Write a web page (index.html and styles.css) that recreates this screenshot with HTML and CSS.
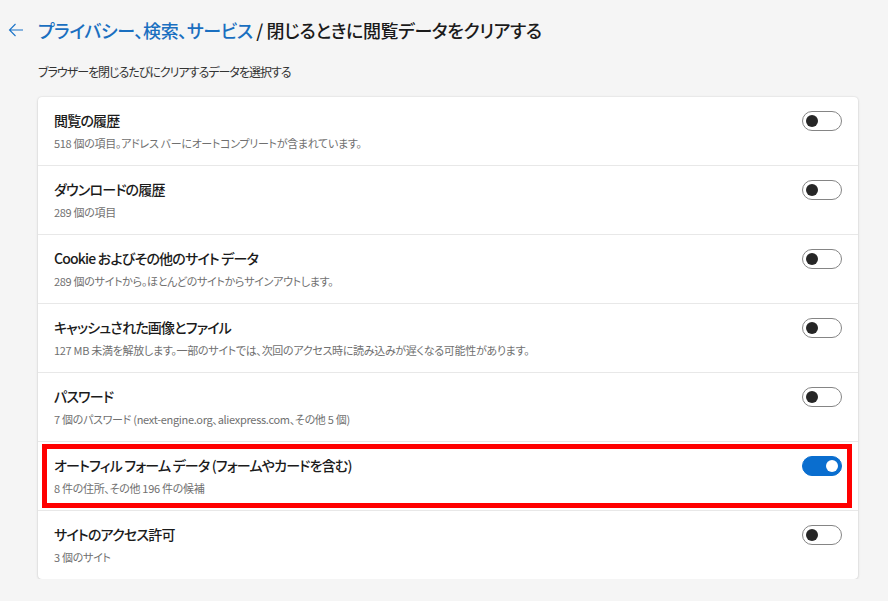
FILE: index.html
```html
<!DOCTYPE html>
<html lang="ja">
<head>
<meta charset="utf-8">
<link rel="stylesheet" href="styles.css">
</head>
<body>
<div class="page">
  <header class="head">
    <svg class="back" width="16" height="16" viewBox="0 0 16 16"><path d="M15 8H1.5M7.5 2L1.5 8l6 6" fill="none" stroke="#1a73c8" stroke-width="1.1"/></svg>
    <h1 class="title"><span class="crumb">プライバシー、検索、サービス</span> / 閉じるときに閲覧データをクリアする</h1>
  </header>
  <p class="lead">ブラウザーを閉じるたびにクリアするデータを選択する</p>
  <div class="card">
    <div class="row">
      <div class="text"><div class="name">閲覧の履歴</div><div class="desc">518 個の項目。アドレス バーにオートコンプリートが含まれています。</div></div>
      <span class="toggle"></span>
    </div>
    <div class="row">
      <div class="text"><div class="name">ダウンロードの履歴</div><div class="desc">289 個の項目</div></div>
      <span class="toggle"></span>
    </div>
    <div class="row">
      <div class="text"><div class="name">Cookie およびその他のサイト データ</div><div class="desc">289 個のサイトから。ほとんどのサイトからサインアウトします。</div></div>
      <span class="toggle"></span>
    </div>
    <div class="row">
      <div class="text"><div class="name">キャッシュされた画像とファイル</div><div class="desc">127 MB 未満を解放します。一部のサイトでは、次回のアクセス時に読み込みが遅くなる可能性があります。</div></div>
      <span class="toggle"></span>
    </div>
    <div class="row">
      <div class="text"><div class="name">パスワード</div><div class="desc">7 個のパスワード (next-engine.org、aliexpress.com、その他 5 個)</div></div>
      <span class="toggle"></span>
    </div>
    <div class="row">
      <div class="text"><div class="name">オートフィル フォーム データ (フォームやカードを含む)</div><div class="desc">8 件の住所、その他 196 件の候補</div></div>
      <span class="toggle on"></span>
      <div class="highlight"></div>
    </div>
    <div class="row">
      <div class="text"><div class="name">サイトのアクセス許可</div><div class="desc">3 個のサイト</div></div>
      <span class="toggle"></span>
    </div>
  </div>
</div>
</body>
</html>
```
FILE: styles.css
```css
* { box-sizing: border-box; }
html, body { margin: 0; padding: 0; }
body {
  background: #f5f5f5;
  font-family: "Noto Sans CJK JP", "Noto Sans", sans-serif;
  font-feature-settings: "palt";
  color: #1b1b1b;
}
.page { padding: 0 30px 0 38px; width: 888px; }
.head {
  display: flex;
  align-items: center;
  height: 24px;
  margin-top: 18px;
  margin-left: -30px;
}
.back { margin-right: 14px; flex: none; }
.title {
  margin: 0;
  font-size: 18px;
  font-weight: 500;
  line-height: 24px;
  letter-spacing: -0.4px;
  white-space: nowrap;
  color: #1b1b1b;
}
.crumb { color: #1a6fc0; }
.lead {
  margin: 20px 0 0;
  font-size: 12px;
  line-height: 20px;
  letter-spacing: -1px;
  color: #333;
}
.card {
  margin-top: 15px;
  width: 820px;
  background: #fff;
  border-radius: 4px;
  box-shadow: 0 0 2px rgba(0,0,0,0.14), 0 1px 3px rgba(0,0,0,0.10);
}
.row {
  position: relative;
  display: flex;
  justify-content: space-between;
  align-items: flex-start;
  height: 69px;
  padding: 13px 16px 0 16px;
  border-bottom: 1px solid #e8e8e8;
}
.row:last-child { border-bottom: 0; height: 68px; }
.name { font-size: 14px; font-weight: 500; line-height: 20px; letter-spacing: -0.8px; color: #1b1b1b; }
.desc { margin-top: 3px; font-size: 11px; line-height: 20px; letter-spacing: -0.3px; color: #707070; }
.toggle {
  position: relative;
  flex: none;
  width: 40px;
  height: 20px;
  margin-top: 1px;
  border: 1px solid #858585;
  border-radius: 10px;
  background: #fff;
}
.toggle::after {
  content: "";
  position: absolute;
  left: 3px;
  top: 3px;
  width: 12px;
  height: 12px;
  border-radius: 50%;
  background: #262626;
}
.toggle.on { background: #0a6ecf; border-color: #0a6ecf; }
.toggle.on::after { left: auto; right: 3px; background: #fff; }
.highlight {
  position: absolute;
  left: 4px;
  right: 6px;
  top: 2px;
  bottom: 2px;
  border: 5px solid #ff0000;
  pointer-events: none;
}
```
